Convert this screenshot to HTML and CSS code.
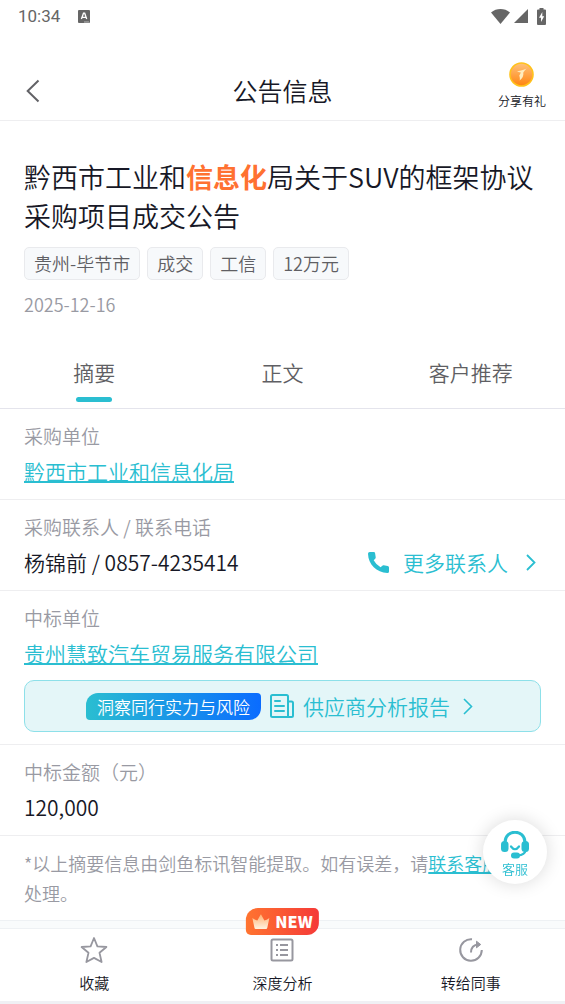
FILE: index.html
```html
<!DOCTYPE html>
<html lang="zh-CN">
<head>
<meta charset="utf-8">
<meta name="viewport" content="width=device-width, initial-scale=1">
<title>公告信息</title>
<link rel="stylesheet" href="styles.css">
</head>
<body>
<div class="status">
  <span class="status-time">10:34</span>
  <svg class="status-app" width="12" height="13" viewBox="0 0 12 13"><rect width="12" height="13" rx="1" fill="#666"/><path d="M3.4 9 5.5 3.2h1.2L8.7 9M4.2 7.3h3.6" fill="none" stroke="#fff" stroke-width="1.3"/><path d="M6 12h5" stroke="#bbb" stroke-width="1"/></svg>
  <span class="status-icons">
    <svg width="19" height="15" viewBox="0 0 19 15"><path d="M0 3.4C5.5-1.1 13.500-1.100 19 3.400L9.500 15z" fill="#666"/></svg>
    <svg width="14" height="14" viewBox="0 0 14 14"><path d="M14 0v14H0z" fill="#666"/></svg>
    <svg class="battery" width="9" height="17" viewBox="0 0 9 17"><path d="M2.500 0h4v1.500H8q1 0 1 1V16q0 1-1 1H1q-1 0-1-1V2.500q0-1 1-1h1.500z" fill="#666"/><path d="M5.300 4 2 9.700h2V14l3.200-5.800H5.300z" fill="#fff"/></svg>
  </span>
</div>
<header class="header">
  <button class="back" type="button" aria-label="返回"><svg width="14" height="24" viewBox="0 0 14 24"><path d="M12.500 1.500 1.700 12l10.800 10.500" fill="none" stroke="#626266" stroke-width="2"/></svg></button>
  <h1 class="header-title">公告信息</h1>
  <button class="share" type="button">
    <svg width="25" height="25" viewBox="0 0 25 25"><defs><linearGradient id="coin" x1="0" y1="0" x2="0" y2="1"><stop offset="0" stop-color="#ffc27c"/><stop offset="1" stop-color="#ff8410"/></linearGradient></defs><circle cx="12.500" cy="12.500" r="11.500" fill="url(#coin)" stroke="#ffc21c" stroke-width="1.600"/><path d="M8 9.800c2.400-1 5-1.500 9.700-3.300-1.800 1.600-2.300 2.600-3.400 3.900.5 3.300-.8 5.800-3.600 8.100.3-1.800.2-3.300-.5-4.700l1.700-3.300z" fill="#ffecbd"/></svg>
    <span>分享有礼</span>
  </button>
</header>
<main class="main">
  <section class="notice">
    <h2 class="notice-title">黔西市工业和<em>信息化</em>局关于SUV的框架协议采购项目成交公告</h2>
    <ul class="tags"><li>贵州-毕节市</li><li>成交</li><li>工信</li><li>12万元</li></ul>
    <time class="date" datetime="2025-12-16">2025-12-16</time>
  </section>
  <nav class="tabs">
    <button class="tab tab-active" type="button">摘要</button>
    <button class="tab" type="button">正文</button>
    <button class="tab" type="button">客户推荐</button>
  </nav>
  <section class="row">
    <h3 class="label">采购单位</h3>
    <div class="value"><a class="link" href="#">黔西市工业和信息化局</a></div>
  </section>
  <section class="row">
    <h3 class="label">采购联系人 / 联系电话</h3>
    <div class="value">
      <span>杨锦前 / 0857-4235414</span>
      <a class="more" href="#">
        <svg width="21" height="21" viewBox="0 0 21 21"><path d="M1.700 0h4Q7 0 7.100 1.300l.6 3.900q.1.900-.5 1.500L5.700 8.300q2.400 4.600 6.900 7l1.700-1.600q.6-.6 1.400-.4l4 .7q1.300.2 1.300 1.500v3.900q0 1.500-1.600 1.500C8.600 20.500.300 12.500 0 1.700Q0 0 1.700 0z" fill="#2abed1"/></svg>
        <span>更多联系人</span>
        <svg width="10" height="17" viewBox="0 0 10 17"><path d="m1 1 7.500 7.500L1 16" fill="none" stroke="#2abed1" stroke-width="1.800"/></svg>
      </a>
    </div>
  </section>
  <section class="row">
    <h3 class="label">中标单位</h3>
    <div class="value"><a class="link" href="#">贵州慧致汽车贸易服务有限公司</a></div>
    <a class="banner" href="#">
      <span class="pill">洞察同行实力与风险</span>
      <svg width="24" height="24" viewBox="0 0 24 24" fill="none" stroke="#2abed1" stroke-width="2"><path d="M18 23H2.500Q1 23 1 21.500v-19Q1 1 2.500 1h14Q18 1 18 2.500V23h3.500Q23 23 23 21.500V9q0-1.500-1.500-1.500H18"/><path d="M5 7h5M5 12h9M5 17h9" stroke-linecap="round"/></svg>
      <span class="banner-text">供应商分析报告</span>
      <svg width="10" height="17" viewBox="0 0 10 17"><path d="m1 1 7.500 7.500L1 16" fill="none" stroke="#2abed1" stroke-width="1.600"/></svg>
    </a>
  </section>
  <section class="row">
    <h3 class="label">中标金额（元）</h3>
    <div class="value">120,000</div>
  </section>
  <p class="note">*以上摘要信息由剑鱼标讯智能提取。如有误差，请<a class="link" href="#">联系客服</a><span class="keep">处理。</span></p>
</main>
<footer class="bottom">
  <button class="action" type="button">
    <svg width="28" height="28" viewBox="0 0 28 28"><path d="m14 2 3.400 8.300 9 .7-6.900 5.800 2.100 9.200-7.600-4.100L6.400 26l2.100-9.200L1.600 11l9-.7z" fill="none" stroke="#97979f" stroke-width="1.800" stroke-linejoin="round"/></svg>
    <span>收藏</span>
  </button>
  <button class="action" type="button">
    <span class="new"><svg width="18" height="15" viewBox="0 0 18 15"><defs><linearGradient id="crown" x1="0" y1="0" x2="0" y2="1"><stop offset="0" stop-color="#ffb172"/><stop offset="1" stop-color="#fff3df"/></linearGradient></defs><path d="M.500 4q2.800 2 5 2.500L8.800.4h.4l3.300 6.100q2.200-.5 5-2.500l-2 9.500q-.2 1.500-1.500 1.500H4q-1.300 0-1.500-1.500z" fill="url(#crown)"/></svg>NEW</span>
    <svg width="28" height="28" viewBox="0 0 28 28" fill="none" stroke="#97979f" stroke-width="2"><rect x="3.500" y="3.500" width="21" height="21" rx="1.500"/><path d="M8 9h2m2 0h8M8 14h2m2 0h8M8 19h2m2 0h8"/></svg>
    <span>深度分析</span>
  </button>
  <button class="action" type="button">
    <svg width="28" height="28" viewBox="0 0 28 28" fill="none" stroke="#97979f" stroke-width="2"><path d="M15 3.200A10.800 10.800 0 1 0 24.800 14"/><path d="M14 16.500c0-4.700 2.500-8 7.500-8" /><path d="m19.500 5.200 4.200 3.300-4.200 3.300z" fill="#97979f" stroke-width="1" stroke-linejoin="round"/></svg>
    <span>转给同事</span>
  </button>
</footer>
<button class="service" type="button">
  <svg width="30" height="28" viewBox="0 0 30 28"><path d="M5 11C5.500-2 24.500-2 25 11" fill="none" stroke="#2abed1" stroke-width="3"/><rect x="1" y="10" width="7.500" height="11" rx="3.500" fill="#2abed1"/><rect x="21.500" y="10" width="7.500" height="11" rx="3.500" fill="#2abed1"/><path d="M11 15.500q4 5.500 8 0M26 19q-1.500 5-8 5.500" fill="none" stroke="#2abed1" stroke-width="2.200" stroke-linecap="round"/><rect x="11" y="21.500" width="9" height="6" rx="3" fill="#2abed1"/></svg>
  <span>客服</span>
</button>
</body>
</html>
```
FILE: styles.css
```css
* { box-sizing: border-box; }
body {
  margin: 0;
  min-height: 100vh;
  display: flex;
  flex-direction: column;
  background: #fff;
  color: #171826;
  font-family: "Noto Sans CJK SC", sans-serif;
  font-weight: 350;
}
button {
  margin: 0;
  padding: 0;
  border: 0;
  background: none;
  color: inherit;
  font: inherit;
}
h1, h2, h3, p, ul { margin: 0; padding: 0; font-weight: inherit; }
svg { display: block; flex: none; }
a { color: #2abed1; text-decoration: none; }

.status {
  display: flex;
  align-items: center;
  height: 32px;
  padding: 0 19px 0 18px;
  color: #666;
}
.status-time { font: 400 17px/32px Roboto, sans-serif; }
.status-app { margin-left: 18px; }
.status-icons { display: flex; align-items: center; gap: 4px; margin-left: auto; }
.battery { margin-left: 5px; }

.header {
  display: grid;
  grid-template-columns: 1fr auto 1fr;
  align-items: end;
  padding: 30px 18px 10px;
  border-bottom: 1px solid #eeeef0;
}
.back { justify-self: start; display: flex; align-items: center; height: 38px; padding: 0 8px; }
.header-title { font-size: 25px; line-height: 40px; }
.share {
  justify-self: end;
  display: flex;
  flex-direction: column;
  align-items: center;
  gap: 5px;
  padding: 0 1px;
  font-size: 12px;
  line-height: 18px;
}

.main { flex: 1; border-bottom: 1px solid #eef1f4; }
.notice { padding: 36px 24px 39px; }
.notice-title { font-size: 27px; line-height: 39px; }
.notice-title em { font-style: normal; font-weight: 700; color: #ff7131; }
.tags { display: flex; flex-wrap: wrap; gap: 7px; margin-top: 12px; list-style: none; }
.tags li {
  padding: 0 9px;
  border: 1px solid #e9eaed;
  border-radius: 5px;
  background: #f7f9fb;
  color: #5f5f64;
  font-size: 18px;
  line-height: 31px;
}
.date { display: block; margin-top: 11px; color: #999aa3; font-size: 18px; line-height: 26px; }

.tabs { display: flex; border-bottom: 1px solid #e4e4ec; }
.tab {
  flex: 1;
  display: flex;
  flex-direction: column;
  align-items: center;
  gap: 9px;
  padding-bottom: 6px;
  color: #5f5f64;
  font-size: 21px;
  line-height: 32px;
}
.tab::after { content: ""; width: 36px; height: 5px; border-radius: 3px; }
.tab-active::after { background: #2abed1; }

.row { padding: 13px 24px 12px; border-bottom: 1px solid #eeeef0; }
.label { color: #999aa3; font-size: 19px; line-height: 28px; }
.value {
  display: flex;
  justify-content: space-between;
  margin-top: 5px;
  font-size: 21px;
  line-height: 32px;
}
.link { text-decoration: underline; text-decoration-thickness: 2px; text-underline-offset: 1px; text-decoration-skip-ink: none; }
.more { display: flex; align-items: center; gap: 14px; padding-right: 5px; }
.more span { margin-right: 4px; }

.banner {
  display: flex;
  align-items: center;
  justify-content: center;
  gap: 9px;
  height: 52px;
  margin-top: 11px;
  padding-right: 6px;
  border: 1px solid #8de0e9;
  border-radius: 10px;
  background: #e4f6f8;
}
.pill {
  padding: 0 11px;
  border-radius: 12px 4px;
  background: linear-gradient(90deg, #2abed1, #0a6cff);
  color: #fff;
  font-size: 17px;
  line-height: 27px;
}
.banner-text { margin-right: 4px; font-size: 21px; line-height: 32px; }
.note { padding: 12px 24px; color: #999aa3; font-size: 18px; line-height: 30px; }
.keep { white-space: nowrap; }

.bottom {
  position: relative;
  display: flex;
  margin-top: 7px;
  padding: 7px 0;
  border-top: 1px solid #eef1f4;
  border-bottom: 3px solid #f0f0f4;
  box-shadow: 0 -7px 0 #f9fbfc;
}
.action {
  position: relative;
  flex: 1;
  display: flex;
  flex-direction: column;
  align-items: center;
  gap: 8px;
  font-size: 15px;
  line-height: 22px;
}
.new {
  position: absolute;
  left: 50%;
  top: -28px;
  transform: translateX(-50%);
  display: flex;
  align-items: center;
  gap: 5px;
  padding: 0 6px;
  border-radius: 12px 5px;
  background: linear-gradient(90deg, #ff7430, #f53a38);
  color: #fff;
  font-size: 16px;
  font-weight: 900;
  line-height: 27px;
}
.service {
  position: fixed;
  right: 18px;
  bottom: 120px;
  display: flex;
  flex-direction: column;
  align-items: center;
  justify-content: center;
  width: 64px;
  height: 64px;
  padding-top: 5px;
  border-radius: 50%;
  background: #fff;
  box-shadow: 0 0 18px rgba(0, 0, 0, 0.15);
  color: #2abed1;
  font-size: 13px;
  line-height: 20px;
}
```
